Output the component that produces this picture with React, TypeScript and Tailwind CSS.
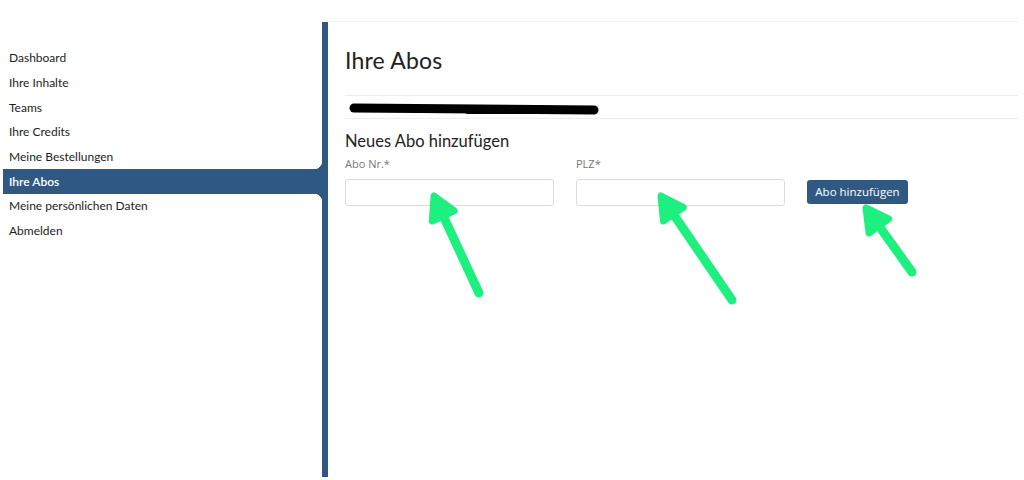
import React from "react";

const items = [
  "Dashboard",
  "Ihre Inhalte",
  "Teams",
  "Ihre Credits",
  "Meine Bestellungen",
  "Ihre Abos",
  "Meine persönlichen Daten",
  "Abmelden",
];

function Arrow({ x1, y1, x2, y2 }: { x1: number; y1: number; x2: number; y2: number }) {
  const dx = x2 - x1;
  const dy = y2 - y1;
  const len = Math.hypot(dx, dy);
  const ux = dx / len;
  const uy = dy / len;
  const px = -uy;
  const py = ux;
  const hl = 22;
  const hw = 12;
  const bx = x1 + ux * hl;
  const by = y1 + uy * hl;
  const head = `${x1},${y1} ${bx + px * hw},${by + py * hw} ${bx - px * hw},${by - py * hw}`;
  return (
    <g>
      <line x1={bx - ux * 2} y1={by - uy * 2} x2={x2} y2={y2} stroke="#1df07f" strokeWidth={9} strokeLinecap="round" />
      <polygon points={head} fill="#1df07f" stroke="#1df07f" strokeWidth={7} strokeLinejoin="round" />
    </g>
  );
}

export default function App() {
  return (
    <div className="relative w-[1024px] h-[480px] bg-white overflow-hidden">
      <div className="flex h-full font-['Lato','Liberation_Sans',sans-serif]">
        {/* Sidebar */}
        <nav className="w-[322px] pt-[46px] pl-[3px]">
          {items.map((t) => {
            const active = t === "Ihre Abos";
            return (
              <div
                key={t}
                className={
                  "relative h-[24.7px] flex items-center pl-[6px] text-[12px] " +
                  (active ? "bg-[#2f5983] text-white font-semibold" : "text-[#1d1d1d]")
                }
              >
                {t}
                {active && (
                  <>
                    <span className="absolute right-0 -top-[8px] w-[8px] h-[8px] bg-[radial-gradient(circle_at_0_0,transparent_8px,#2f5983_8.5px)]" />
                    <span className="absolute right-0 -bottom-[8px] w-[8px] h-[8px] bg-[radial-gradient(circle_at_0_100%,transparent_8px,#2f5983_8.5px)]" />
                  </>
                )}
              </div>
            );
          })}
        </nav>
        {/* vertical bar */}
        <div className="w-[6px] mt-[22px] mb-[3px] bg-[#2f5983]" />
        {/* Content */}
        <main className="flex-1 mt-[21px] mr-[6px] border-t border-[#f0f0f0] pl-[17px]">
          <h1 className="mt-[24px] text-[23px] leading-[28px] text-[#222] tracking-[0.2px]">Ihre Abos</h1>
          <div className="mt-[21px] h-[24px] border-y border-[#ececec] flex items-center">
            <svg width="260" height="16" viewBox="0 0 260 16" className="ml-[3px] mt-[3px]">
              <path d="M6 7 L246 9" stroke="#000" strokeWidth={9} strokeLinecap="round" />
              <path d="M120 10 L246 10" stroke="#000" strokeWidth={6} strokeLinecap="round" />
            </svg>
          </div>
          <h2 className="mt-[12px] text-[16.5px] leading-[20px] text-[#222]">Neues Abo hinzufügen</h2>
          <div className="flex items-end mt-[6px] font-['Open_Sans','Liberation_Sans',sans-serif]">
            <div className="w-[209px]">
              <label className="block text-[11px] text-[#777] leading-[14px]">Abo Nr.*</label>
              <input className="mt-[8px] block w-full h-[27px] border border-[#dcdcdc] rounded-[3px] outline-none" />
            </div>
            <div className="w-[209px] ml-[22px]">
              <label className="block text-[11px] text-[#777] leading-[14px]">PLZ*</label>
              <input className="mt-[8px] block w-full h-[27px] border border-[#dcdcdc] rounded-[3px] outline-none" />
            </div>
            <button className="ml-[22px] mb-[2px] w-[101px] h-[24px] bg-[#2f5983] rounded-[3px] text-white text-[11.5px] leading-none">
              Abo hinzufügen
            </button>
          </div>
        </main>
      </div>
      <svg className="absolute inset-0 pointer-events-none" width="1024" height="480">
        <Arrow x1={434} y1={196} x2={479} y2={293} />
        <Arrow x1={661} y1={196} x2={732} y2={300} />
        <Arrow x1={866} y1={208} x2={912} y2={272} />
      </svg>
    </div>
  );
}
